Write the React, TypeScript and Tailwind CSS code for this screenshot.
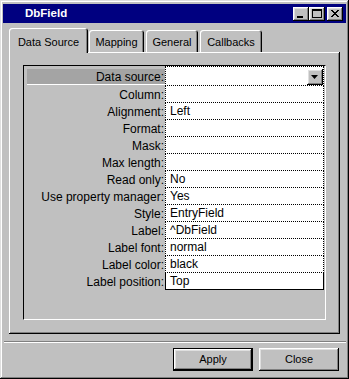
import React from 'react';

const rows: [string, string][] = [
  ['Data source:', ''],
  ['Column:', ''],
  ['Alignment:', 'Left'],
  ['Format:', ''],
  ['Mask:', ''],
  ['Max length:', ''],
  ['Read only:', 'No'],
  ['Use property manager:', 'Yes'],
  ['Style:', 'EntryField'],
  ['Label:', '^DbField'],
  ['Label font:', 'normal'],
  ['Label color:', 'black'],
  ['Label position:', 'Top'],
];

const raised =
  'shadow-[inset_-1px_-1px_#000,inset_1px_1px_#fff,inset_-2px_-2px_#808080,inset_2px_2px_#dfdfdf]';

const TitleButton: React.FC<{ children: React.ReactNode; className?: string }> = ({ children, className }) => (
  <div className={`w-[16px] h-[14px] bg-[#c0c0c0] flex items-center justify-center ${raised} ${className ?? ''}`}>
    {children}
  </div>
);

const Tab: React.FC<{ label: string; active?: boolean; className: string }> = ({ label, active, className }) => (
  <div
    className={`${className} relative flex items-start justify-center bg-[#c0c0c0] rounded-t-[3px] shadow-[inset_1px_1px_#fff,inset_-1px_0_#000,inset_-2px_0_#808080] ${
      active ? 'h-[25px] z-10 pt-[6px]' : 'h-[22px] pt-[4px]'
    }`}
  >
    {label}
  </div>
);

export default function App() {
  return (
    <div
      className="w-[349px] h-[379px] bg-[#c0c0c0] flex flex-col px-[3px] pt-[4px] text-black shadow-[inset_-1px_-1px_#000,inset_1px_1px_#dfdfdf,inset_-2px_-2px_#808080,inset_2px_2px_#fff]"
      style={{ fontFamily: '"Liberation Sans", Arial, sans-serif' }}
    >
      {/* Title bar */}
      <div className="h-[19px] bg-[#000080] flex items-center pl-[22px] pr-[3px]">
        <span className="text-white font-bold text-[11.5px] leading-none flex-1">DbField</span>
        <TitleButton>
          <svg width="16" height="14" viewBox="0 0 16 14">
            <rect x="4" y="9" width="6" height="2" fill="#000" />
          </svg>
        </TitleButton>
        <TitleButton>
          <svg width="16" height="14" viewBox="0 0 16 14">
            <rect x="3.5" y="2.5" width="9" height="8" fill="none" stroke="#000" />
            <rect x="3" y="2" width="10" height="2" fill="#000" />
          </svg>
        </TitleButton>
        <TitleButton className="ml-[2px]">
          <svg width="16" height="14" viewBox="0 0 16 14">
            <path d="M4 3 L11 10 M5 3 L12 10 M11 3 L4 10 M12 3 L5 10" stroke="#000" strokeWidth="1" shapeRendering="crispEdges" />
          </svg>
        </TitleButton>
      </div>

      {/* Tabs */}
      <div className="mt-[5px] ml-[6px] h-[24px] flex items-end text-[11px]">
        <Tab label="Data Source" active className="w-[79px] -mb-px" />
        <Tab label="Mapping" className="w-[55px] ml-[1px]" />
        <Tab label="General" className="w-[52px] ml-[2px]" />
        <Tab label="Callbacks" className="w-[62px] ml-[2px]" />
      </div>

      {/* Panel */}
      <div className="mx-[6px] h-[282px] pt-[13px] pl-[14px] shadow-[inset_-1px_-1px_#000,inset_1px_1px_#fff,inset_-2px_-2px_#808080]">
        <div className="w-[303px] h-[255px] border-t border-l border-black border-b border-r border-b-white border-r-white">
          <div className="w-[300px] flex flex-col text-[12px]">
            {rows.map(([label, value], i) => {
              const first = i === 0;
              const last = i === rows.length - 1;
              return (
                <div key={label} className={`flex ${first ? 'h-[20px]' : 'h-[17px]'}`}>
                  <div className="w-[141px] flex">
                    {first ? (
                      <div className="mt-[3px] ml-[3px] h-[16px] flex-1 bg-[#a4a4a4] border-b border-white flex items-center justify-end pr-[1px]">
                        {label}
                      </div>
                    ) : (
                      <div className="flex-1 flex items-center justify-end pr-[1px]">{label}</div>
                    )}
                  </div>
                  <div
                    className={`flex-1 bg-white border-l border-r border-black flex items-center pl-[4px] ${
                      first ? 'border-t' : ''
                    } ${last ? 'border-b border-b-black' : 'border-b border-dotted border-b-black'}`}
                  >
                    <span className="flex-1">{value}</span>
                    {first && (
                      <div className={`w-[16px] h-[16px] self-end bg-[#c0c0c0] flex items-center justify-center ${raised}`}>
                        <svg width="8" height="4" viewBox="0 0 8 4">
                          <path d="M0 0 H7 L3.5 4 Z" fill="#000" />
                        </svg>
                      </div>
                    )}
                  </div>
                </div>
              );
            })}
          </div>
        </div>
      </div>

      {/* Separator */}
      <div className="mt-[7px] ml-[1px] w-[342px] h-[2px] border-t border-[#808080] border-b border-b-white" />

      {/* Buttons */}
      <div className="mt-[5px] flex justify-end gap-[6px] pr-[7px] text-[11px]">
        <div className="w-[80px] h-[23px] border border-black">
          <div className={`w-full h-full flex items-center justify-center ${raised}`}>Apply</div>
        </div>
        <div className={`w-[80px] h-[23px] flex items-center justify-center ${raised}`}>Close</div>
      </div>
    </div>
  );
}
